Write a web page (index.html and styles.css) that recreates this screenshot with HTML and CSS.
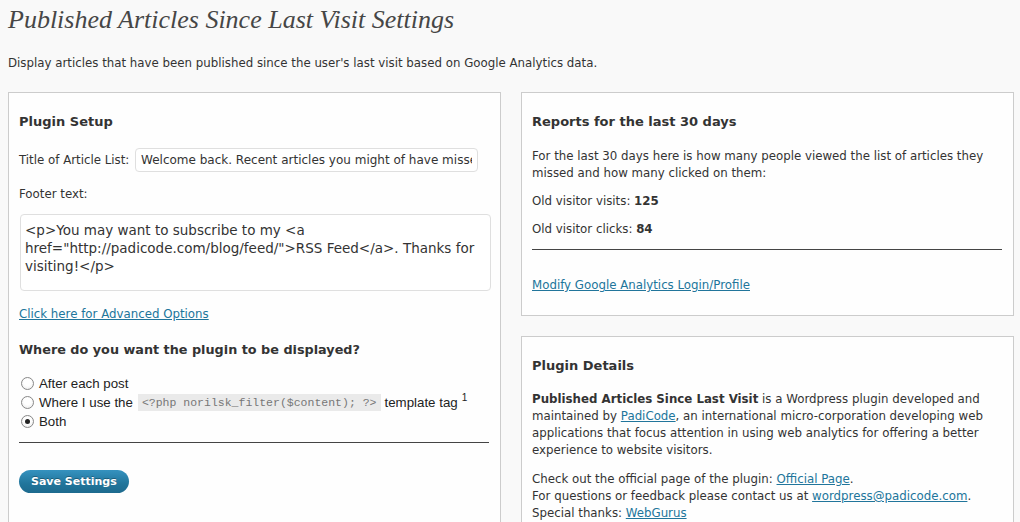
FILE: index.html
```html
<!DOCTYPE html>
<html>
<head>
<meta charset="utf-8">
<title>Published Articles Since Last Visit Settings</title>
<link rel="stylesheet" href="styles.css">
</head>
<body>
<div class="wrap">
  <h2 class="page-title">Published Articles Since Last Visit Settings</h2>
  <p class="intro">Display articles that have been published since the user's last visit based on Google Analytics data.</p>

  <div class="columns">
    <div class="col">
      <div class="box box-setup">
        <h3 class="box-title">Plugin Setup</h3>
        <div class="field-row">
          <label class="label" for="title">Title of Article List:</label>
          <input id="title" class="text-input" type="text" value="Welcome back. Recent articles you might of have missed:">
        </div>
        <p class="label-line">Footer text:</p>
        <div class="textarea">&lt;p&gt;You may want to subscribe to my &lt;a href="http://padicode.com/blog/feed/"&gt;RSS Feed&lt;/a&gt;. Thanks for visiting!&lt;/p&gt;</div>
        <p class="adv"><a href="#">Click here for Advanced Options</a></p>
        <h4 class="question">Where do you want the plugin to be displayed?</h4>
        <ul class="radios">
          <li><span class="radio"></span>After each post</li>
          <li><span class="radio"></span>Where I use the <code class="code">&lt;?php norilsk_filter($content); ?&gt;</code> template tag <sup class="sup">1</sup></li>
          <li><span class="radio checked"></span>Both</li>
        </ul>
        <hr class="rule">
        <div class="actions"><span class="button">Save Settings</span></div>
      </div>
    </div>

    <div class="col col-right">
      <div class="box box-reports">
        <h3 class="box-title">Reports for the last 30 days</h3>
        <p class="para first">For the last 30 days here is how many people viewed the list of articles they missed and how many clicked on them:</p>
        <p class="para">Old visitor visits: <strong>125</strong></p>
        <p class="para">Old visitor clicks: <strong>84</strong></p>
        <hr class="rule rule-right">
        <p class="para modify"><a href="#">Modify Google Analytics Login/Profile</a></p>
      </div>

      <div class="box box-details">
        <h3 class="box-title">Plugin Details</h3>
        <p class="para first-details"><strong>Published Articles Since Last Visit</strong> is a Wordpress plugin developed and maintained by <a href="#">PadiCode</a>, an international micro-corporation developing web applications that focus attention in using web analytics for offering a better experience to website visitors.</p>
        <p class="para">Check out the official page of the plugin: <a href="#">Official Page</a>.<br>For questions or feedback please contact us at <a href="#">wordpress@padicode.com</a>.<br>Special thanks: <a href="#">WebGurus</a></p>
      </div>
    </div>
  </div>
</div>
</body>
</html>
```

FILE: styles.css
```css
html, body {
  margin: 0;
  padding: 0;
  background: #f9f9f9;
  height: 100%;
  overflow: hidden;
}

body {
  font-family: "DejaVu Sans", Verdana, sans-serif;
  font-size: 11.8px;
  color: #333;
}

a {
  color: #21759b;
  text-decoration: underline;
}

.wrap {
  padding: 0 7px 0 8px;
}

.page-title {
  margin: 0;
  padding-top: 5px;
  font-family: "Liberation Serif", Georgia, serif;
  font-style: italic;
  font-weight: normal;
  font-size: 26px;
  line-height: 30px;
  color: #464646;
}

.intro {
  margin: 20px 0 0;
  line-height: 17px;
}

.columns {
  display: grid;
  grid-template-columns: 493px 493px;
  column-gap: 20px;
  margin-top: 20px;
}

.col-right {
  display: flex;
  flex-direction: column;
  gap: 20px;
}

.box {
  background: #fefefe;
  border: 1px solid #cccccc;
  padding: 10px;
}

.box-setup {
  height: 460px;
}

.box-title {
  margin: 10px 0 0;
  font-size: 13px;
  line-height: 17px;
  font-weight: bold;
}

.field-row {
  display: flex;
  align-items: center;
  margin-top: 18px;
}

.label {
  white-space: nowrap;
  width: 116px;
  flex: none;
}

.text-input {
  box-sizing: border-box;
  width: 343px;
  height: 24px;
  border: 1px solid #dfdfdf;
  border-radius: 4px;
  background: #fff;
  font-family: "DejaVu Sans", Verdana, sans-serif;
  font-size: 12px;
  color: #333;
  padding: 0 5px;
  outline: none;
}

.label-line {
  margin: 14px 0 0;
  line-height: 17px;
}

.textarea {
  box-sizing: border-box;
  margin: 11px 0 0 1px;
  width: 471px;
  height: 77px;
  border: 1px solid #dfdfdf;
  border-radius: 4px;
  background: #fff;
  font-size: 13.5px;
  line-height: 18px;
  padding: 6px 4px;
  color: #333;
}

.adv {
  margin: 15px 0 0;
  line-height: 17px;
}

.question {
  margin: 18px 0 0;
  font-size: 12.8px;
  line-height: 17px;
  font-weight: bold;
}

.radios {
  list-style: none;
  margin: 16px 0 0;
  padding: 0;
  font-family: "Liberation Sans", Arial, sans-serif;
  font-size: 13.3px;
  color: #222;
}

.radios li {
  display: flex;
  align-items: center;
  height: 19px;
  white-space: nowrap;
}

.radio {
  box-sizing: border-box;
  width: 13px;
  height: 13px;
  border: 1px solid #888;
  border-radius: 50%;
  background: radial-gradient(circle at 50% 40%, #fff 40%, #e6e6e6 100%);
  margin: 0 5px 0 2px;
  position: relative;
  flex: none;
}

.radio.checked::after {
  content: "";
  position: absolute;
  left: 3px;
  top: 3px;
  width: 5px;
  height: 5px;
  border-radius: 50%;
  background: #222;
}

.code {
  font-family: "Liberation Mono", "Courier New", monospace;
  font-size: 11.5px;
  background: #eaeaea;
  color: #777;
  padding: 2px 4px;
  margin: 0 4px 0 5px;
}

.sup {
  font-size: 10px;
  position: relative;
  top: -5px;
  margin-left: 4px;
  line-height: 0;
}

.rule {
  border: 0;
  border-top: 1px solid #444;
  margin: 11px 0 0;
  height: 0;
  width: 470px;
}

.actions {
  margin-top: 27px;
}

.button {
  display: inline-block;
  box-sizing: border-box;
  height: 23px;
  line-height: 23px;
  padding: 0 12px;
  border-radius: 12px;
  background: linear-gradient(#3592bf, #21759b 60%, #1d6a8e);
  color: #fff;
  font-weight: bold;
  font-size: 11px;
  text-shadow: 0 -1px 0 rgba(0, 0, 0, 0.3);
}

.para {
  margin: 11px 0 0;
  line-height: 17px;
}

.para.first {
  margin-top: 18px;
}

.para.first-details {
  margin-top: 17px;
}

.box-details .para + .para {
  margin-top: 12px;
}

.rule-right {
  margin-top: 11px;
}

.modify {
  margin-top: 27px;
  margin-bottom: 11px;
}

.box-details {
  flex: 1;
}
```
